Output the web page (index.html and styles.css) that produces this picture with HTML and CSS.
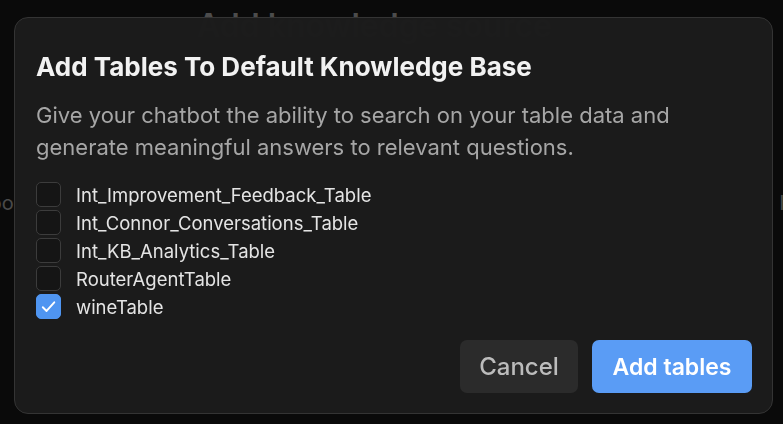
FILE: index.html
```html
<!DOCTYPE html>
<html lang="en">
<head>
<meta charset="utf-8">
<title>Add Tables</title>
<link rel="stylesheet" href="styles.css">
</head>
<body>
<div class="page">
  <h1 class="page-title">Add knowledge source</h1>
  <div class="page-row">
    <span class="page-left">Knowledge bo</span>
    <span class="page-right">Int</span>
  </div>
</div>

<div class="modal">
  <h2 class="modal-title">Add Tables To Default Knowledge Base</h2>
  <p class="modal-desc">Give your chatbot the ability to search on your table data and generate meaningful answers to relevant questions.</p>
  <ul class="table-list">
    <li class="table-item"><span class="box"></span><span class="label">Int_Improvement_Feedback_Table</span></li>
    <li class="table-item"><span class="box"></span><span class="label">Int_Connor_Conversations_Table</span></li>
    <li class="table-item"><span class="box"></span><span class="label">Int_KB_Analytics_Table</span></li>
    <li class="table-item"><span class="box"></span><span class="label">RouterAgentTable</span></li>
    <li class="table-item"><span class="box checked"><svg viewBox="0 0 24 24" width="21" height="21"><path d="M5.5 12.8l4.3 4.3L18.6 7.2" fill="none" stroke="#ffffff" stroke-width="2.2" stroke-linecap="round" stroke-linejoin="round"/></svg></span><span class="label">wineTable</span></li>
  </ul>
  <div class="actions">
    <button class="btn btn-cancel">Cancel</button>
    <button class="btn btn-primary">Add tables</button>
  </div>
</div>
</body>
</html>
```
FILE: styles.css
```css
* { box-sizing: border-box; }
html, body { margin: 0; padding: 0; }
body {
  background: #0a0a0a;
  font-family: Inter, "Noto Sans", sans-serif;
  width: 783px;
  height: 424px;
  overflow: hidden;
}
.page {
  padding-top: 6px;
}
.page-title {
  margin: 0 0 0 197px;
  font-size: 32px;
  font-weight: 600;
  color: #4c4c4c;
  line-height: 40px;
}
.page-row {
  display: flex;
  justify-content: space-between;
  margin-top: 145px;
  font-size: 20px;
  color: #4a4a4a;
}
.page-left { margin-left: -122px; }
.page-right { margin-right: -20px; }

.modal {
  position: fixed;
  left: 14px;
  top: 17px;
  width: 759px;
  height: 397px;
  background: rgba(27, 27, 27, 0.985);
  border: 1px solid #343434;
  border-radius: 14px;
  padding: 33px 20px 20px 21px;
  display: flex;
  flex-direction: column;
}
.modal-title {
  margin: 0;
  font-size: 26px;
  font-weight: 700;
  color: #f2f2f2;
  line-height: 32px;
}
.modal-desc {
  margin: 16px 0 0;
  font-size: 22px;
  line-height: 32px;
  color: #a6a6a6;
  max-width: 670px;
}
.table-list {
  list-style: none;
  margin: 19px 0 0;
  padding: 0;
  display: flex;
  flex-direction: column;
  gap: 3px;
}
.table-item {
  display: flex;
  align-items: center;
  gap: 15px;
  height: 25px;
}
.box {
  width: 25px;
  height: 25px;
  border: 1px solid #3c3c3c;
  border-radius: 5px;
  background: #151515;
  display: flex;
  align-items: center;
  justify-content: center;
  flex: none;
}
.box.checked {
  background: #4f95f1;
  border-color: #4f95f1;
}
.label {
  font-size: 18.5px;
  color: #e4e4e4;
}
.actions {
  margin-top: auto;
  display: flex;
  justify-content: flex-end;
  gap: 14px;
}
.btn {
  height: 53px;
  border: none;
  border-radius: 7px;
  font-family: Inter, "Noto Sans", sans-serif;
  padding: 0;
  cursor: pointer;
}
.btn-cancel {
  width: 118px;
  background: #2b2b2b;
  color: #bcbcbc;
  font-size: 24px;
  font-weight: 500;
}
.btn-primary {
  width: 160px;
  background: #5a9cf5;
  color: #ffffff;
  font-size: 23px;
  font-weight: 600;
}
```
